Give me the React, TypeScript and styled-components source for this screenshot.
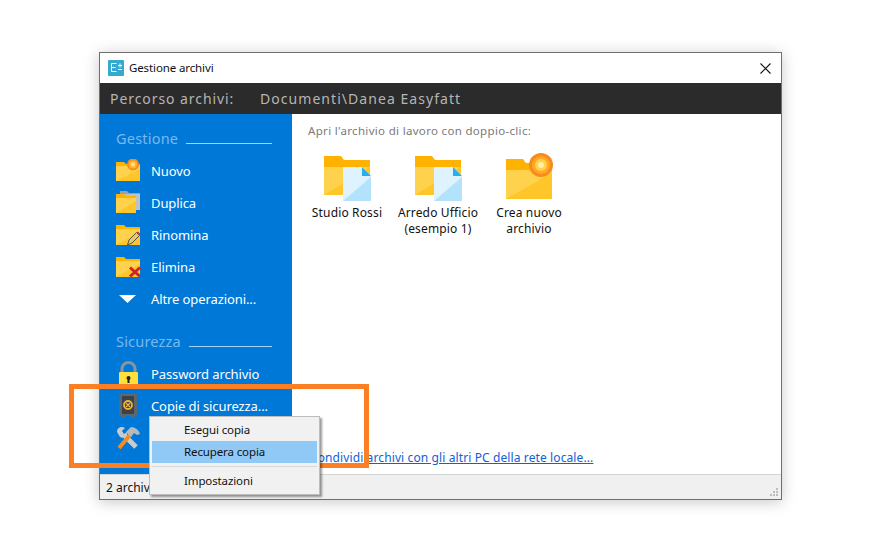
import React from 'react';
import styled, { createGlobalStyle } from 'styled-components';

const Global = createGlobalStyle`
  html, body { margin: 0; padding: 0; background: #fff; }
  body { width: 872px; height: 543px; overflow: hidden; font-family: "Noto Sans", "DejaVu Sans", sans-serif; }
`;
const Stage = styled.div`position: relative; width: 872px; height: 543px; padding: 52px 0 0 99px; box-sizing: border-box;`;
const Win = styled.div`
  width: 683px; height: 448px; box-sizing: border-box; border: 1px solid #6f6f6f; background: #fff;
  display: flex; flex-direction: column; box-shadow: 0 2px 14px rgba(0,0,0,.22);
`;
const TitleBar = styled.div`height: 30px; display: flex; align-items: center; padding: 0 10px 0 8px; gap: 5px; flex: none;`;
const Title = styled.span`font-size: 11.5px; color: #111; flex: 1; letter-spacing: -.12px; margin-top: -2px;`;
const PathBar = styled.div`
  height: 31px; flex: none; background: #2b2b2b; color: #b5b5b5; display: flex; align-items: center; padding-left: 10px;
  font-size: 14px; letter-spacing: 1.05px;
`;
const PathLabel = styled.span`width: 150px; letter-spacing: .93px;`;
const Main = styled.div`flex: 1; display: flex; min-height: 0;`;
const Side = styled.nav`width: 192px; flex: none; background: #0078d7; padding: 15px 20px 0 16px; box-sizing: border-box;`;
const SectionHead = styled.div<{ $mt?: number }>`
  display: flex; align-items: center; gap: 8px; color: #78b9f0; font-size: 14.5px; letter-spacing: .2px; height: 18px;
  margin-top: ${p => p.$mt ?? 0}px; margin-bottom: 8px;
  &::after { content: ''; display: block; flex: 1; height: 1px; background: #a6d3f7; margin-top: 10px; }
`;
const Row = styled.div`height: 32px; display: flex; align-items: center; color: #fff; font-size: 13px; letter-spacing: -.1px; white-space: nowrap;`;
const RowIcon = styled.div<{ $inset?: number }>`width: 35px; box-sizing: border-box; padding-left: ${p => p.$inset ?? 0}px; flex: none; display: flex; align-items: center;`;
const Content = styled.div`flex: 1; padding: 9px 16px 0; position: relative; display: flex; flex-direction: column;`;
const Hint = styled.div`font-size: 11.5px; color: #7a7a7a; letter-spacing: .32px;`;
const Items = styled.div`display: flex; margin: 15px 0 0 -1px; gap: 11px;`;
const Item = styled.div`width: 80px; display: flex; flex-direction: column; align-items: center; text-align: center; font-size: 12px; line-height: 16px; color: #111; letter-spacing: .15px; white-space: nowrap;`;
const ItemIcon = styled.div`height: 50px; margin: 0 0 2px 2px;`;
const Share = styled.a`
  margin-top: auto; margin-bottom: 8px; margin-left: 2px; font-size: 12px; letter-spacing: .11px; color: #0e62d6; text-decoration: underline; white-space: nowrap; align-self: flex-start;
`;
const Status = styled.div`
  height: 25px; flex: none; box-sizing: border-box; background: #f0f0f0; border-top: 1px solid #d4d4d4; padding-left: 6px;
  display: flex; align-items: center; font-size: 12px; color: #111; position: relative;
`;
const Grip = styled.svg`position: absolute; right: 2px; bottom: 2px;`;
const Menu = styled.div`
  position: absolute; left: 149px; top: 416px; width: 171px; height: 79px; box-sizing: border-box; background: #f1f1f1; border: 1px solid #bdbdbd;
  padding: 2px; box-shadow: 2px 2px 2px rgba(0,0,0,.4); font-size: 11.5px; color: #111; letter-spacing: -.12px;
`;
const MenuItem = styled.div<{ $active?: boolean }>`
  height: 22px; box-sizing: border-box; display: flex; align-items: center; padding: 0 0 2px 32px; background: ${p => p.$active ? '#90c8f6' : 'transparent'};
`;
const Sep = styled.div`height: 1px; background: #d7d7d7; margin: 3px 0;`;
const Highlight = styled.div`position: absolute; left: 69px; top: 384px; width: 300px; height: 84px; box-sizing: border-box; border: 5px solid #fd7f23; pointer-events: none;`;

const FolderBase = ({ w = 24, top = 2 }: { w?: number; top?: number }) => (
  <>
    <path d={`M0 ${top}h8l2 2h${w - 10}v${22 - top - 2}H0z`} fill="#ffb300" />
    <path d={`M0 ${top + 4}H${w}V22H0z`} fill="#ffd24d" />
    <path d={`M0 22L${w} ${top + 7}V22z`} fill="#ffc629" />
  </>
);
const Nuovo = () => (
  <svg width="25" height="24" viewBox="0 0 25 24">
    <FolderBase top={3} />
    <circle cx="17" cy="5.500" r="6" fill="#f98a1c" /><circle cx="17" cy="5.500" r="4" fill="#ffb52e" /><circle cx="17" cy="5.500" r="2" fill="#ffeb8a" />
  </svg>
);
const Duplica = () => (
  <svg width="25" height="24" viewBox="0 0 25 24">
    <path d="M4 0h7l2 2h11v17H4z" fill="#9aa2a8" /><path d="M6 3h18v16H6z" fill="#bcc1c5" />
    <path d="M0 3h8l2 2h10v17H0z" fill="#ffb300" /><path d="M0 7h20v15H0z" fill="#ffd24d" /><path d="M0 22L20 10v12z" fill="#ffc629" />
  </svg>
);
const Rinomina = () => (
  <svg width="25" height="24" viewBox="0 0 25 24">
    <FolderBase />
    <path d="M11.500 22l1.500-5 7.500-7.500 3 3-7.500 7.500z" fill="#e6c86e" stroke="#444" strokeWidth=".9" /><path d="M20.500 9.500l3 3 1-1.500-2.500-2.500z" fill="#c9363a" />
  </svg>
);
const Elimina = () => (
  <svg width="25" height="24" viewBox="0 0 25 24">
    <FolderBase />
    <path d="M14 12.500l10 9M24 12.500l-10 9" stroke="#c9252b" strokeWidth="3" />
  </svg>
);
const Arrow = () => <svg width="17" height="8" viewBox="0 0 17 8"><path d="M0 0h17l-8.500 8z" fill="#fff" /></svg>;
const Lock = () => (
  <svg width="25" height="26" viewBox="0 0 25 26">
    <path d="M6 12V8a6.500 6.500 0 0 1 13 0v4" fill="none" stroke="#8d9499" strokeWidth="3" />
    <rect x="3" y="11" width="19" height="15" rx="1" fill="#ffdf3a" />
    <circle cx="12.500" cy="17" r="2" fill="#222" /><rect x="11.500" y="17" width="2" height="5" fill="#222" />
  </svg>
);
const Safe = () => (
  <svg width="18" height="24" viewBox="0 0 18 24">
    <rect width="18" height="22" fill="#5d676f" /><rect x="3" y="2" width="12" height="18" fill="#3a434b" />
    <rect x="2" y="22" width="4" height="2" fill="#5d676f" /><rect x="12" y="22" width="4" height="2" fill="#5d676f" />
    <circle cx="9" cy="11" r="4" fill="none" stroke="#f3b32f" strokeWidth="1.800" /><path d="M7 9l4 4M11 9l-4 4" stroke="#f3b32f" strokeWidth="1.200" />
  </svg>
);
const Tools = () => (
  <svg width="25" height="24" viewBox="0 0 25 24">
    <path d="M8 9L20 21" stroke="#c6ccd0" strokeWidth="5" /><path d="M1 6c0-5 5-6 8-4L6 5l2 3 3-2c1 4-3 7-7 5z" fill="#c6ccd0" />
    <path d="M3 22L14 9" stroke="#f58a1f" strokeWidth="4" /><path d="M10 6l5-5c4 0 8 3 9 7l-3 1-3-2-3 4z" fill="#b4bbc0" />
  </svg>
);
const Docs = () => (
  <svg width="48" height="50" viewBox="0 0 48 50">
    <path d="M0 3h17l3 4h26v35H0z" fill="#ffb300" />
    <path d="M0 14h46v28H0z" fill="#ffd24d" />
    <path d="M0 42L46 14v28z" fill="#ffc629" />
    <path d="M19 14h19l9 9v25H19z" fill="#dff3fe" />
    <path d="M19 48L47 24v24z" fill="#b2e2fc" />
    <path d="M38 14l9 9h-9z" fill="#25aef0" />
  </svg>
);
const NewBig = () => (
  <svg width="48" height="50" viewBox="0 0 48 50">
    <path d="M0 6h17l3 4h26v36H0z" fill="#ffb300" />
    <path d="M0 17h46v29H0z" fill="#ffd24d" />
    <path d="M0 46L46 20v26z" fill="#ffc629" />
    <circle cx="35" cy="12" r="12" fill="#f98a1c" /><circle cx="35" cy="12" r="9" fill="#ffa928" /><circle cx="35" cy="12" r="6" fill="#ffd24d" /><circle cx="35" cy="12" r="3" fill="#fff0a0" />
  </svg>
);

export default function App() {
  return (
    <Stage>
      <Global />
      <Win>
        <TitleBar>
          <svg width="16" height="16" viewBox="0 0 16 16"><rect width="16" height="16" rx="1" fill="#35a9d0" /><path d="M8.500 3.500H3.500v8h5M3.500 7.500h4M10 5.500h4M12 3.500v4M10 9.500h4" stroke="#fff" strokeWidth="1" fill="none" /></svg>
          <Title>Gestione archivi</Title>
          <svg width="11" height="11" viewBox="0 0 11 11"><path d="M.5.500l10 10M10.500.500l-10 10" stroke="#111" strokeWidth="1.100" /></svg>
        </TitleBar>
        <PathBar><PathLabel>Percorso archivi:</PathLabel><span>Documenti\Danea Easyfatt</span></PathBar>
        <Main>
          <Side>
            <SectionHead>Gestione</SectionHead>
            <Row><RowIcon><Nuovo /></RowIcon>Nuovo</Row>
            <Row><RowIcon><Duplica /></RowIcon>Duplica</Row>
            <Row><RowIcon><Rinomina /></RowIcon>Rinomina</Row>
            <Row><RowIcon><Elimina /></RowIcon>Elimina</Row>
            <Row><RowIcon $inset={3}><Arrow /></RowIcon>Altre operazioni...</Row>
            <SectionHead $mt={17}>Sicurezza</SectionHead>
            <Row><RowIcon><Lock /></RowIcon>Password archivio</Row>
            <Row><RowIcon $inset={3}><Safe /></RowIcon>Copie di sicurezza...</Row>
            <Row><RowIcon><Tools /></RowIcon></Row>
          </Side>
          <Content>
            <Hint>Apri l'archivio di lavoro con doppio-clic:</Hint>
            <Items>
              <Item><ItemIcon><Docs /></ItemIcon>Studio Rossi</Item>
              <Item><ItemIcon><Docs /></ItemIcon>Arredo Ufficio<br />(esempio 1)</Item>
              <Item><ItemIcon><NewBig /></ItemIcon>Crea nuovo<br />archivio</Item>
            </Items>
            <Share href="#">Condividi archivi con gli altri PC della rete locale...</Share>
          </Content>
        </Main>
        <Status>
          2 archivi
          <Grip width="9" height="9" viewBox="0 0 9 9"><path d="M6 0h2v2H6zM3 3h2v2H3zM6 3h2v2H6zM0 6h2v2H0zM3 6h2v2H3zM6 6h2v2H6z" fill="#bdbdbd" /></Grip>
        </Status>
      </Win>
      <Highlight />
      <Menu>
        <MenuItem>Esegui copia</MenuItem>
        <MenuItem $active>Recupera copia</MenuItem>
        <Sep />
        <MenuItem>Impostazioni</MenuItem>
      </Menu>
    </Stage>
  );
}
